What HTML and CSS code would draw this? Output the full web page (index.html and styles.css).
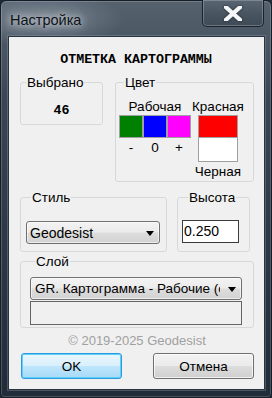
FILE: index.html
```html
<!DOCTYPE html>
<html lang="ru">
<head>
    <meta charset="UTF-8">
    <meta name="viewport" content="width=device-width, initial-scale=1.0">
    <title>Настройка</title>
    <link rel="stylesheet" href="styles.css">
</head>
<body>
    <div class="window">
        <!-- заголовок окна -->
        <div class="title-bar">
            <span class="title">Настройка</span>
            <button class="close-btn" aria-label="Закрыть">
                <svg width="18" height="15" viewBox="0 0 18 15">
                    <line x1="-1" y1="-1.5" x2="19" y2="16.5" stroke="#f4f6f8" stroke-width="4.2"/>
                    <line x1="19" y1="-1.5" x2="-1" y2="16.5" stroke="#f4f6f8" stroke-width="4.2"/>
                </svg>
            </button>
        </div>

        <!-- клиентская область -->
        <div class="client">
            <div class="heading">ОТМЕТКА КАРТОГРАММЫ</div>

            <div class="row row-top">
                <fieldset class="group group-count">
                    <legend>Выбрано</legend>
                    <div class="count">46</div>
                </fieldset>

                <fieldset class="group group-color">
                    <legend>Цвет</legend>
                    <div class="colors">
                        <div class="color-col work-col">
                            <div class="color-label">Рабочая</div>
                            <div class="swatches">
                                <span class="swatch green"></span>
                                <span class="swatch blue"></span>
                                <span class="swatch magenta"></span>
                            </div>
                            <div class="marks">
                                <span>-</span>
                                <span>0</span>
                                <span>+</span>
                            </div>
                        </div>
                        <div class="color-col red-col">
                            <div class="color-label">Красная</div>
                            <span class="swatch wide red"></span>
                            <span class="swatch wide white"></span>
                            <div class="color-label black-label">Черная</div>
                        </div>
                    </div>
                </fieldset>
            </div>

            <div class="row row-mid">
                <fieldset class="group group-style">
                    <legend>Стиль</legend>
                    <div class="combo combo-style">
                        <span class="combo-text">Geodesist</span>
                        <span class="combo-arrow"></span>
                    </div>
                </fieldset>

                <fieldset class="group group-height">
                    <legend>Высота</legend>
                    <div class="edit">0.250</div>
                </fieldset>
            </div>

            <fieldset class="group group-layer">
                <legend>Слой</legend>
                <div class="combo combo-layer">
                    <span class="combo-text">GR. Картограмма - Рабочие (слои)</span>
                    <span class="combo-arrow"></span>
                </div>
                <div class="layer-box"></div>
            </fieldset>

            <div class="copyright">© 2019-2025 Geodesist</div>

            <div class="buttons">
                <button class="btn btn-default">OK</button>
                <button class="btn">Отмена</button>
            </div>
        </div>
    </div>
</body>
</html>
```

FILE: styles.css
```css
body {
    margin: 0;
    padding: 0;
    background-color: #1f2a36;
    font-family: "Liberation Sans", Arial, sans-serif;
}

.window {
    box-sizing: border-box;
    width: 272px;
    height: 398px;
    border: 1px solid #151d27;
    border-radius: 6px 6px 4px 4px;
    background:
        radial-gradient(ellipse 120px 40px at 40px 18px, rgba(200, 208, 215, 0.35), transparent 70%),
        linear-gradient(180deg, #55626e 0%, #3a4654 25%, #2e3a48 55%, #212c39 100%);
    box-shadow: inset 0 0 0 1px rgba(255, 255, 255, 0.18);
    display: flex;
    flex-direction: column;
}

.title-bar {
    height: 36px;
    display: flex;
    align-items: flex-start;
}

.title {
    margin: 11px 0 0 9px;
    font-size: 14.5px;
    line-height: 17px;
    color: #101418;
    text-shadow: 0 0 6px rgba(225, 230, 235, 0.9), 0 0 12px rgba(215, 222, 228, 0.8), 0 0 18px rgba(200, 208, 215, 0.6);
}

.close-btn {
    margin: -1px 7px 0 auto;
    width: 62px;
    height: 27px;
    padding: 0;
    border: 1px solid #1a232e;
    border-top: none;
    border-radius: 0 0 5px 5px;
    background: linear-gradient(180deg, #5a6673 0%, #4a5562 50%, #3f4a57 100%);
    box-shadow: inset 0 0 0 1px rgba(255, 255, 255, 0.22);
    display: flex;
    align-items: center;
    justify-content: center;
}

.close-btn svg {
    display: block;
    margin-top: 1px;
    filter: drop-shadow(0 0 1px rgba(0, 0, 0, 0.6));
}

.client {
    flex: 1;
    margin: 0 6px 7px 7px;
    border: 1px solid #2a3440;
    box-shadow: 0 0 0 1px rgba(150, 160, 170, 0.35);
    background-color: #f0f0f0;
    padding: 15px 10px 10px 11px;
    display: flex;
    flex-direction: column;
}

.heading {
    font-family: "Liberation Mono", "DejaVu Sans Mono", monospace;
    font-weight: bold;
    font-size: 13.3px;
    line-height: 16px;
    text-align: center;
    color: #000;
    margin-left: -2px;
}

.row {
    display: flex;
    justify-content: space-between;
    align-items: flex-start;
}

.row-top {
    margin-top: 7px;
}

.row-mid {
    margin-top: 8px;
}

.group {
    margin: 0;
    padding: 0;
    min-width: 0;
    border: 1px solid #d5d9dc;
    border-radius: 3px;
}

.group legend {
    margin-left: 5px;
    padding: 0 1px;
    font-size: 13.5px;
    line-height: 15px;
    color: #000;
}

.group-count {
    width: 83px;
    box-sizing: border-box;
    padding: 13px 0 5px;
}

.count {
    font-family: "Liberation Mono", "DejaVu Sans Mono", monospace;
    font-weight: bold;
    font-size: 13.3px;
    line-height: 16px;
    text-align: center;
}

.group-color {
    width: 139px;
    box-sizing: border-box;
    padding: 9px 0 2px 3px;
}

.colors {
    display: flex;
    gap: 1px;
}

.color-col {
    display: flex;
    flex-direction: column;
    align-items: center;
}

.color-label {
    font-size: 13.5px;
    line-height: 15px;
    white-space: nowrap;
}

.swatches {
    display: flex;
    margin-top: 1px;
}

.swatch {
    display: block;
    box-sizing: border-box;
    width: 24px;
    height: 23px;
    border: 1px solid #a0a0a0;
}

.swatch.wide {
    width: 40px;
}

.red-col .swatch.red {
    margin-top: 1px;
}

.swatch.green {
    background-color: #008000;
}

.swatch.blue {
    background-color: #0000ff;
}

.swatch.magenta {
    background-color: #ff00ff;
}

.swatch.red {
    background-color: #ff0000;
}

.swatch.white {
    background-color: #ffffff;
    height: 25px;
    margin-top: -1px;
}

.marks {
    display: flex;
    margin-top: 2px;
    font-size: 13.5px;
    line-height: 15px;
}

.marks span {
    width: 24px;
    text-align: center;
}

.black-label {
    margin-top: 2px;
}

.group-style {
    width: 147px;
    box-sizing: border-box;
    padding: 16px 0 7px 5px;
}

.group-height {
    width: 73px;
    margin-right: 4px;
    box-sizing: border-box;
    padding: 15px 0 8px 4px;
}

.group-height legend {
    margin-left: 6px;
}

.combo {
    box-sizing: border-box;
    height: 23px;
    border: 1px solid #707070;
    border-radius: 3px;
    background: linear-gradient(180deg, #f3f3f3 0%, #ebebeb 48%, #dddddd 52%, #d2d2d2 100%);
    box-shadow: inset 0 0 0 1px rgba(255, 255, 255, 0.6);
    display: flex;
    align-items: center;
    color: #000;
}

.combo-text {
    flex: 1;
    overflow: hidden;
    white-space: nowrap;
    line-height: 16px;
}

.combo-arrow {
    width: 0;
    height: 0;
    border-left: 4.5px solid transparent;
    border-right: 4.5px solid transparent;
    border-top: 5px solid #000;
    margin: 1px 0 0 4px;
}

.combo-style {
    width: 134px;
    padding: 0 5px 0 3px;
    font-size: 14px;
}

.edit {
    box-sizing: border-box;
    width: 57px;
    height: 23px;
    border: 1px solid #3c3c3c;
    background-color: #fff;
    padding: 1px 0 0 1px;
    font-size: 14px;
    line-height: 19px;
}

.group-layer {
    margin-top: 2px;
    padding: 8px 0 2px 9px;
    margin-right: 0;
}

.combo-layer {
    width: 212px;
    padding: 0 5px 0 4px;
    font-size: 13.5px;
}

.combo-layer .combo-arrow {
    margin-left: 8px;
}

.layer-box {
    box-sizing: border-box;
    width: 212px;
    height: 24px;
    margin-top: 1px;
    border: 1px solid #646464;
    background-color: #f0f0f0;
}

.copyright {
    margin-top: 5px;
    font-size: 13px;
    line-height: 15px;
    text-align: center;
    color: #a0a0a0;
}

.buttons {
    margin-top: 5px;
    padding-left: 1px;
    display: flex;
    justify-content: space-between;
}

.btn {
    box-sizing: border-box;
    width: 101px;
    height: 26px;
    padding: 0;
    border: 1px solid #707070;
    border-radius: 3px;
    background: linear-gradient(180deg, #f2f2f2 0%, #ebebeb 48%, #dddddd 52%, #cfcfcf 100%);
    box-shadow: inset 0 0 0 1px rgba(255, 255, 255, 0.7);
    font-family: "Liberation Sans", Arial, sans-serif;
    font-size: 13.5px;
    color: #000;
}

.btn-default {
    border-color: #2a9be0;
    background: linear-gradient(180deg, #eaf6fd 0%, #d9f0fc 48%, #bee6fd 52%, #a7d9f5 100%);
    box-shadow: inset 0 0 0 1px #5fd0fa;
}
```
